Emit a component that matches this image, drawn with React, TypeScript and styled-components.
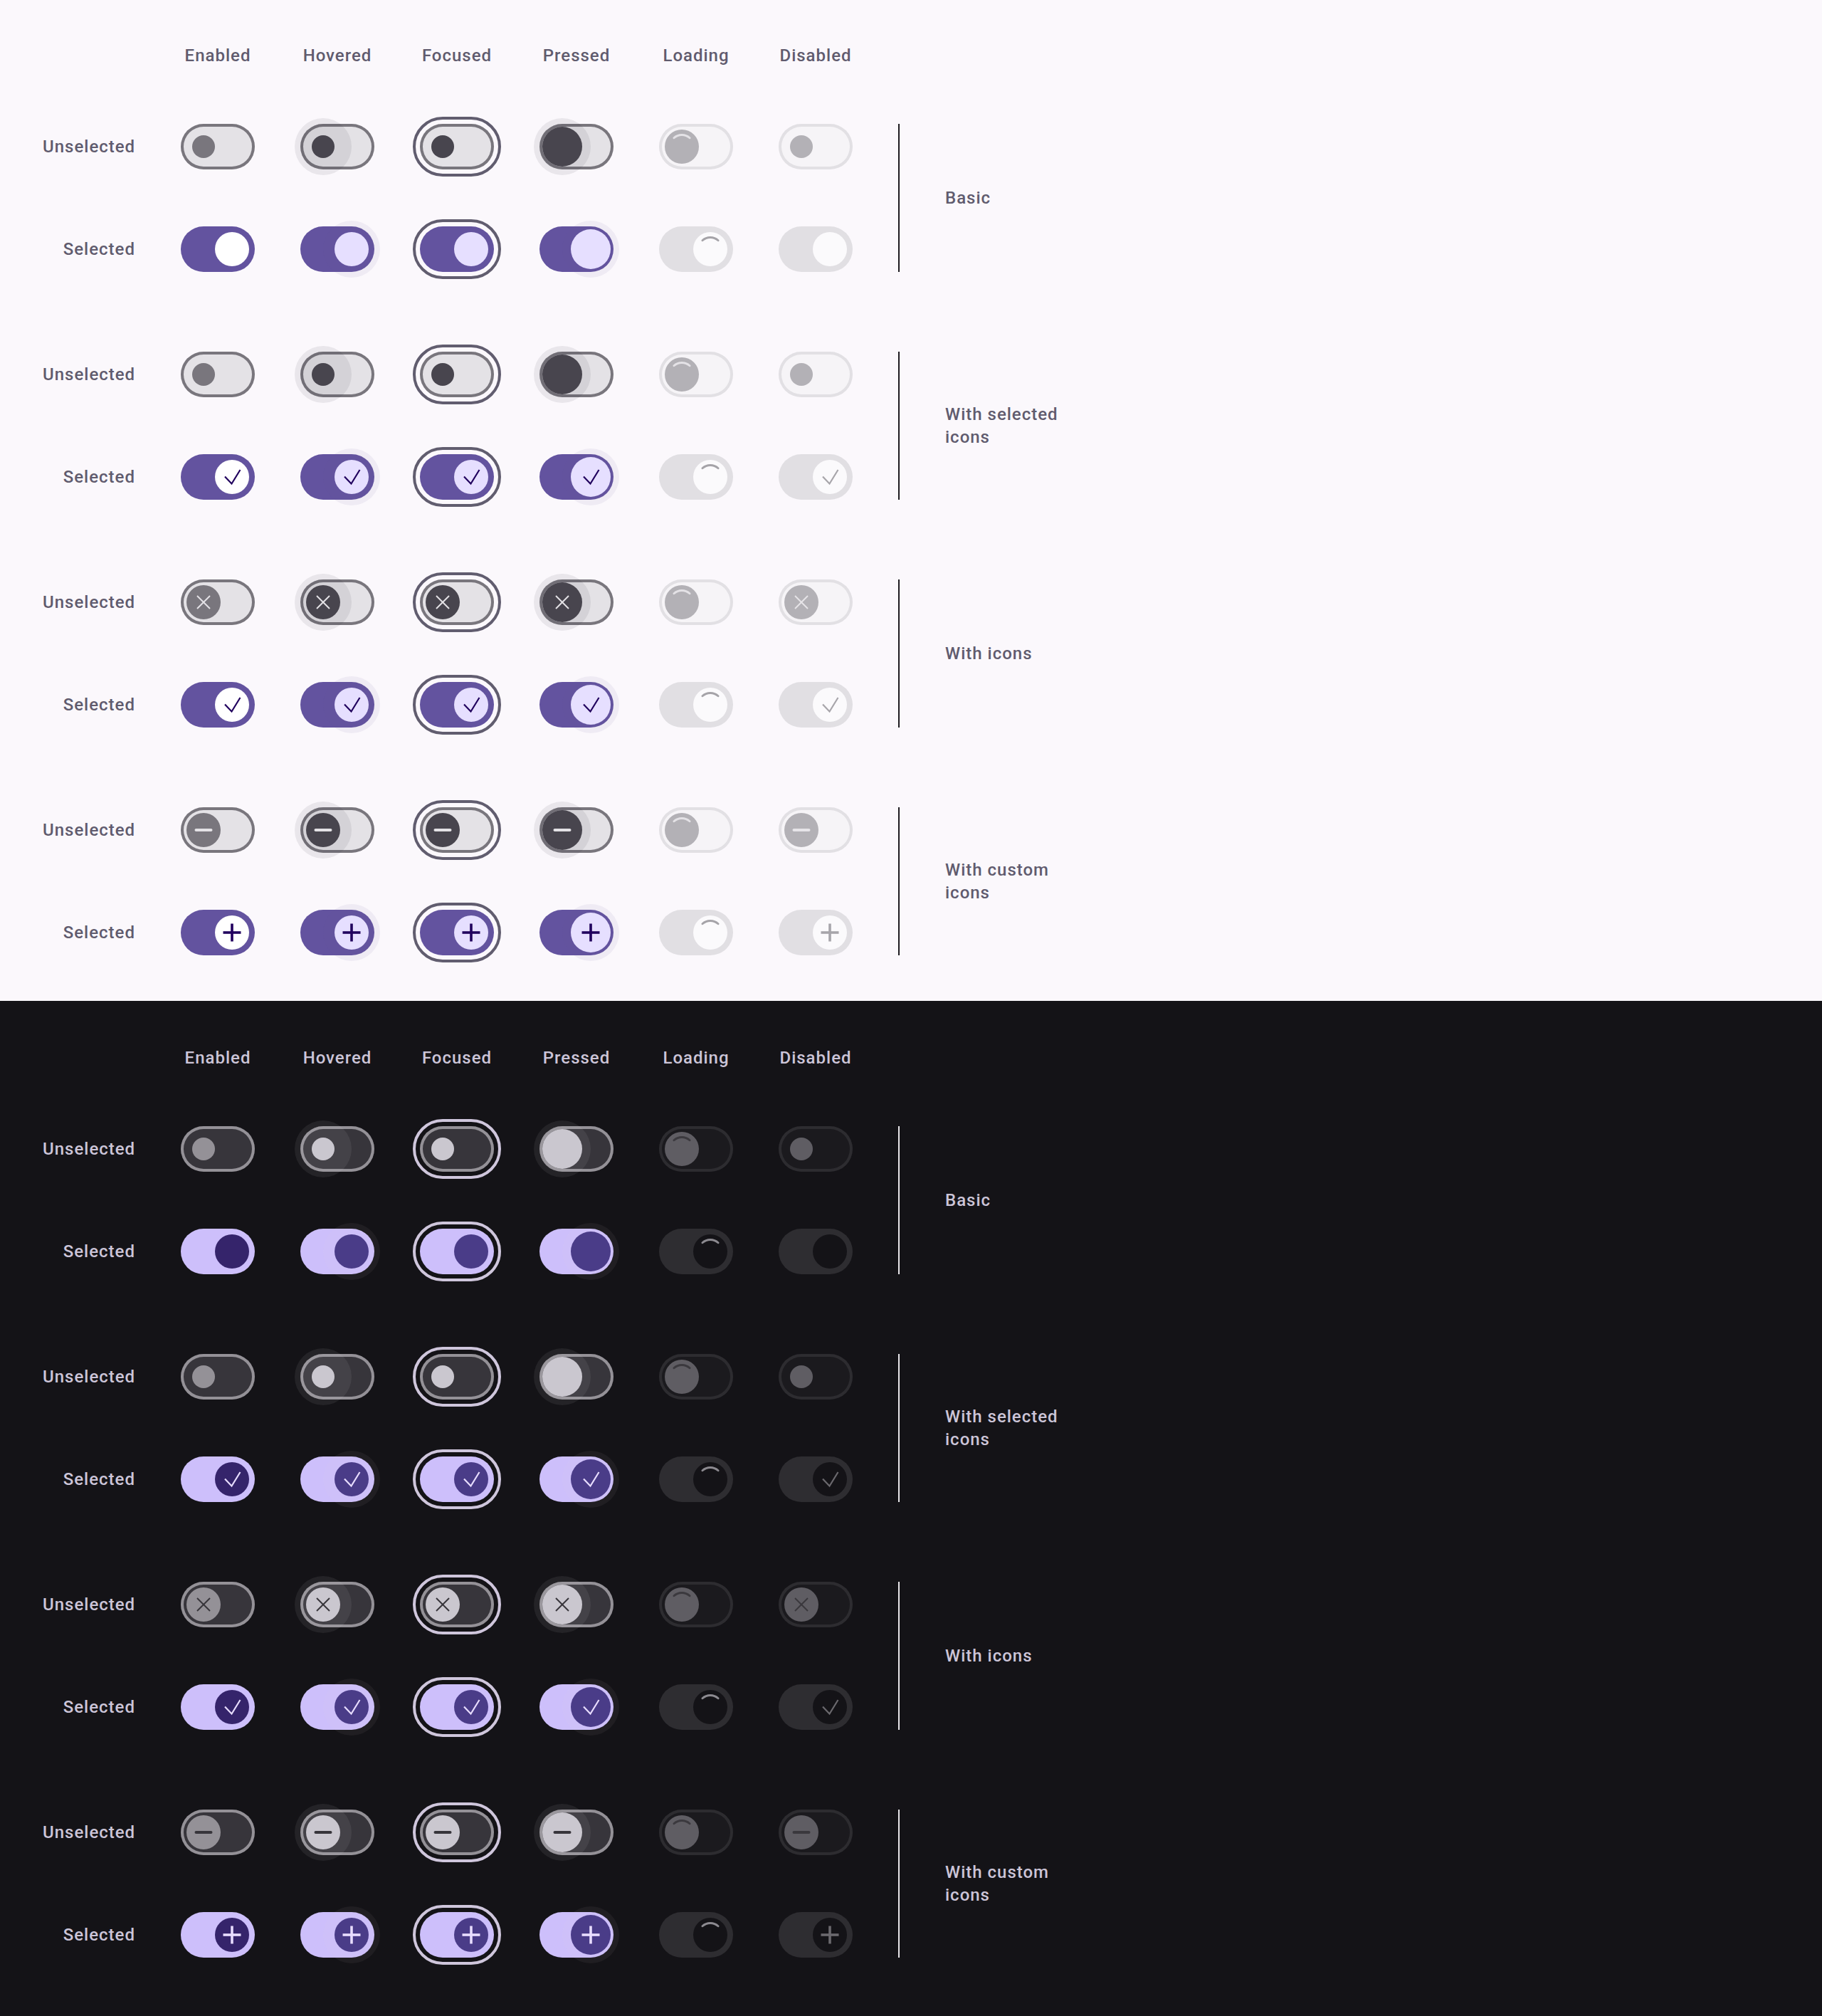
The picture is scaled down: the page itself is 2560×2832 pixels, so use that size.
import React from 'react';
import styled, { createGlobalStyle, ThemeProvider } from 'styled-components';

type Palette = {
  bg: string;
  text: string;
  line: string;
  outline: string;
  trackOff: string;
  handleOff: string;
  handleOffActive: string;
  primary: string;
  onPrimary: string;
  primaryContainer: string;
  onPrimaryIcon: string;
  offIcon: string;
  ring: string;
  layerOff: string;
  layerOffPressed: string;
  layerOn: string;
  layerOnPressed: string;
  disBorder: string;
  disTrackOff: string;
  disHandleOff: string;
  disTrackOn: string;
  disHandleOn: string;
  disIconOff: string;
  disIconOn: string;
  arcOff: string;
  arcOn: string;
  padTop: number;
};

const light: Palette = {
  bg: '#fbf8fc',
  text: '#605b6e',
  line: '#1d1b20',
  outline: '#79767d',
  trackOff: '#e4e2e6',
  handleOff: '#79767d',
  handleOffActive: '#48454e',
  primary: '#63539f',
  onPrimary: '#ffffff',
  primaryContainer: '#e6dfff',
  onPrimaryIcon: '#21005e',
  offIcon: '#e4e2e6',
  ring: '#615d6f',
  layerOff: 'rgba(29, 27, 32, 0.08)',
  layerOffPressed: 'rgba(29, 27, 32, 0.08)',
  layerOn: 'rgba(99, 83, 159, 0.08)',
  layerOnPressed: 'rgba(99, 83, 159, 0.08)',
  disBorder: '#e2e0e4',
  disTrackOff: '#f6f4f7',
  disHandleOff: '#b3b1b6',
  disTrackOn: '#e1dfe3',
  disHandleOn: '#fbfafc',
  disIconOff: '#e6e4e8',
  disIconOn: '#a7a5aa',
  arcOff: '#e4e2e6',
  arcOn: '#a5a3a8',
  padTop: 62,
};

const dark: Palette = {
  bg: '#141317',
  text: '#ccc5d8',
  line: '#e8e6ea',
  outline: '#949197',
  trackOff: '#37353b',
  handleOff: '#949197',
  handleOffActive: '#cac7cf',
  primary: '#cdbffb',
  onPrimary: '#35246b',
  primaryContainer: '#4a3c88',
  onPrimaryIcon: '#e8ddff',
  offIcon: '#37353b',
  ring: '#cfc6dc',
  layerOff: 'rgba(230, 225, 229, 0.08)',
  layerOffPressed: 'rgba(230, 225, 229, 0.08)',
  layerOn: 'rgba(230, 225, 229, 0.06)',
  layerOnPressed: 'rgba(230, 225, 229, 0.06)',
  disBorder: '#2d2c30',
  disTrackOff: '#1b1a1e',
  disHandleOff: '#5f5d63',
  disTrackOn: '#2e2d31',
  disHandleOn: '#141317',
  disIconOff: '#3a383d',
  disIconOn: '#6b696e',
  arcOff: '#3b393e',
  arcOn: '#8c8a90',
  padTop: 64,
};

type State = 'enabled' | 'hovered' | 'focused' | 'pressed' | 'loading' | 'disabled';
type IconKind = 'none' | 'check' | 'close' | 'minus' | 'plus';

const STATES: State[] = ['enabled', 'hovered', 'focused', 'pressed', 'loading', 'disabled'];
const HEADERS = ['Enabled', 'Hovered', 'Focused', 'Pressed', 'Loading', 'Disabled'];

const GROUPS: { label: string; off: IconKind; on: IconKind }[] = [
  { label: 'Basic', off: 'none', on: 'none' },
  { label: 'With selected icons', off: 'none', on: 'check' },
  { label: 'With icons', off: 'close', on: 'check' },
  { label: 'With custom icons', off: 'minus', on: 'plus' },
];

const GlobalStyle = createGlobalStyle`
  html, body {
    margin: 0;
    padding: 0;
    background: #141317;
  }
  body {
    font-family: Roboto, "Liberation Sans", Arial, sans-serif;
  }
`;

const Page = styled.div`
  display: flex;
  flex-direction: column;
  min-height: 100vh;
`;

const Section = styled.section<{ $fill?: boolean }>`
  display: flex;
  flex-direction: column;
  padding: ${p => p.theme.padTop}px 0 64px 60px;
  background: ${p => p.theme.bg};
  flex: ${p => (p.$fill ? 1 : 'none')};
`;

const columns = `130px repeat(6, 104px) 2px 184px`;

const HeaderRow = styled.div`
  display: grid;
  grid-template-columns: ${columns};
  column-gap: 64px;
`;

const Label = styled.div<{ $align?: 'left' | 'center' | 'right' }>`
  font-size: 24px;
  line-height: 32px;
  font-weight: 500;
  letter-spacing: 1px;
  color: ${p => p.theme.text};
  text-align: ${p => p.$align || 'left'};
  align-self: center;
  white-space: nowrap;
`;

const GroupLabel = styled(Label)`
  grid-column: 9;
  grid-row: 1 / span 2;
  white-space: normal;
`;

const Group = styled.div<{ $first?: boolean }>`
  display: grid;
  grid-template-columns: ${columns};
  grid-template-rows: 64px 64px;
  column-gap: 64px;
  row-gap: 80px;
  margin-top: ${p => (p.$first ? 80 : 112)}px;
`;

const Divider = styled.div`
  grid-column: 8;
  grid-row: 1 / span 2;
  background: ${p => p.theme.line};
`;

const Track = styled.div<{ $selected: boolean; $inactive: boolean; $focused: boolean }>`
  position: relative;
  width: 104px;
  height: 64px;
  border-radius: 32px;
  align-self: center;
  background: ${p =>
    p.$selected
      ? p.$inactive
        ? p.theme.disTrackOn
        : p.theme.primary
      : p.$inactive
        ? p.theme.disTrackOff
        : p.theme.trackOff};
  box-shadow: ${p =>
    p.$selected ? 'none' : `inset 0 0 0 4px ${p.$inactive ? p.theme.disBorder : p.theme.outline}`};

  &::after {
    content: '';
    display: ${p => (p.$focused ? 'block' : 'none')};
    position: absolute;
    inset: -10px;
    border: 4px solid ${p => p.theme.ring};
    border-radius: 44px;
  }
`;

const StateLayer = styled.div<{ $selected: boolean; $pressed: boolean }>`
  position: absolute;
  top: -8px;
  left: ${p => (p.$selected ? 32 : -8)}px;
  width: 80px;
  height: 80px;
  border-radius: 50%;
  background: ${p =>
    p.$selected
      ? p.$pressed
        ? p.theme.layerOnPressed
        : p.theme.layerOn
      : p.$pressed
        ? p.theme.layerOffPressed
        : p.theme.layerOff};
`;

const handleColor = (p: { $selected: boolean; $state: State; theme: Palette }) => {
  const inactive = p.$state === 'loading' || p.$state === 'disabled';
  if (p.$selected) {
    if (inactive) return p.theme.disHandleOn;
    return p.$state === 'enabled' ? p.theme.onPrimary : p.theme.primaryContainer;
  }
  if (inactive) return p.theme.disHandleOff;
  return p.$state === 'enabled' ? p.theme.handleOff : p.theme.handleOffActive;
};

const iconColor = (p: { $selected: boolean; $state: State; theme: Palette }) => {
  const inactive = p.$state === 'loading' || p.$state === 'disabled';
  if (p.$selected) return inactive ? p.theme.disIconOn : p.theme.onPrimaryIcon;
  return inactive ? p.theme.disIconOff : p.theme.offIcon;
};

const Handle = styled.div<{ $selected: boolean; $state: State; $size: number }>`
  position: absolute;
  display: flex;
  align-items: center;
  justify-content: center;
  width: ${p => p.$size}px;
  height: ${p => p.$size}px;
  top: ${p => 32 - p.$size / 2}px;
  left: ${p => (p.$selected ? 72 : 32) - p.$size / 2}px;
  border-radius: 50%;
  background: ${handleColor};
  color: ${iconColor};

  svg {
    flex: none;
  }
`;

const Spinner = styled.path<{ $selected: boolean }>`
  fill: none;
  stroke: ${p => (p.$selected ? p.theme.arcOn : p.theme.arcOff)};
  stroke-width: 3;
  stroke-linecap: round;
`;

const Glyph = ({ kind }: { kind: IconKind }) => {
  if (kind === 'none') return null;
  return (
    <svg width="48" height="48" viewBox="0 0 48 48" fill="none" stroke="currentColor">
      {kind === 'check' && (
        <polyline points="14,23.5 23.5,33.5 35.5,14" strokeWidth="2.2" strokeLinejoin="miter" />
      )}
      {kind === 'close' && (
        <g strokeWidth="2">
          <line x1="15" y1="15" x2="33" y2="33" />
          <line x1="33" y1="15" x2="15" y2="33" />
        </g>
      )}
      {kind === 'minus' && <line x1="13.5" y1="24" x2="34.5" y2="24" strokeWidth="4" strokeLinecap="round" />}
      {kind === 'plus' && (
        <g strokeWidth="3.6">
          <line x1="11.5" y1="24" x2="36.5" y2="24" />
          <line x1="24" y1="11.5" x2="24" y2="36.5" />
        </g>
      )}
    </svg>
  );
};

const Switch = ({ selected, state, icon }: { selected: boolean; state: State; icon: IconKind }) => {
  const inactive = state === 'loading' || state === 'disabled';
  const size =
    state === 'loading' ? 48 : state === 'pressed' ? 56 : selected || icon !== 'none' ? 48 : 32;

  return (
    <Track $selected={selected} $inactive={inactive} $focused={state === 'focused'}>
      {(state === 'hovered' || state === 'pressed') && (
        <StateLayer $selected={selected} $pressed={state === 'pressed'} />
      )}
      <Handle $selected={selected} $state={state} $size={size}>
        {state === 'loading' ? (
          <svg width="48" height="48" viewBox="0 0 48 48">
            <Spinner $selected={selected} d="M12.96 11.74 A16.5 16.5 0 0 1 35.04 11.74" />
          </svg>
        ) : (
          <Glyph kind={icon} />
        )}
      </Handle>
    </Track>
  );
};

const Showcase = ({ fill }: { fill?: boolean }) => (
  <Section $fill={fill}>
    <HeaderRow>
      <div />
      {HEADERS.map(h => (
        <Label key={h} $align="center">
          {h}
        </Label>
      ))}
    </HeaderRow>
    {GROUPS.map((g, gi) => (
      <Group key={g.label} $first={gi === 0}>
        <Label $align="right">Unselected</Label>
        {STATES.map(s => (
          <Switch key={s} selected={false} state={s} icon={g.off} />
        ))}
        <Divider />
        <GroupLabel>{g.label}</GroupLabel>
        <Label $align="right">Selected</Label>
        {STATES.map(s => (
          <Switch key={s} selected state={s} icon={g.on} />
        ))}
      </Group>
    ))}
  </Section>
);

const App = () => (
  <>
    <GlobalStyle />
    <Page>
      <ThemeProvider theme={light}>
        <Showcase />
      </ThemeProvider>
      <ThemeProvider theme={dark}>
        <Showcase fill />
      </ThemeProvider>
    </Page>
  </>
);

export default App;
